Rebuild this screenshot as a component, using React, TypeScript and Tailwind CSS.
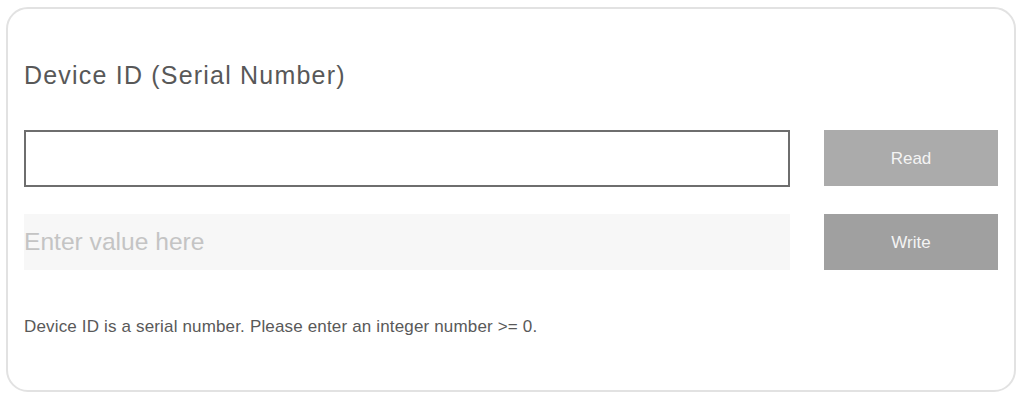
export default function App() {
  return (
    <div className="w-[1024px] h-[400px] bg-white pt-[7px] pl-[6px] pr-[8px]" style={{ fontFamily: '"Liberation Sans", Arial, sans-serif' }}>
      <div className="h-[385px] rounded-[22px] border-2 border-[#e2e2e2] px-4 flex flex-col">
        <h1 className="mt-[51px] text-[25px] leading-[30px] tracking-[1.2px] text-[#585858] font-normal">
          Device ID (Serial Number)
        </h1>

        <div className="mt-[40px] grid grid-cols-[766px_1fr] gap-x-[34px] gap-y-[27px]">
          <input
            type="text"
            className="h-[57px] border-2 border-[#6e6e6e] bg-white px-2 text-[24px] text-[#444] outline-none"
          />
          <button className="h-[56px] bg-[#ababab] pt-[2px] text-[17px] text-[#f4f4f4]">Read</button>

          <input
            type="text"
            placeholder="Enter value here"
            className="h-[56px] bg-[#f7f7f7] px-0 text-[24.6px] text-[#444] placeholder:text-[#c4c4c4] outline-none"
          />
          <button className="h-[56px] bg-[#a0a0a0] pt-[2px] text-[17px] text-[#f4f4f4]">Write</button>
        </div>

        <p className="mt-[45px] text-[17px] leading-[24px] tracking-[0.16px] text-[#595959]">
          Device ID is a serial number. Please enter an integer number &gt;= 0.
        </p>
      </div>
    </div>
  );
}
